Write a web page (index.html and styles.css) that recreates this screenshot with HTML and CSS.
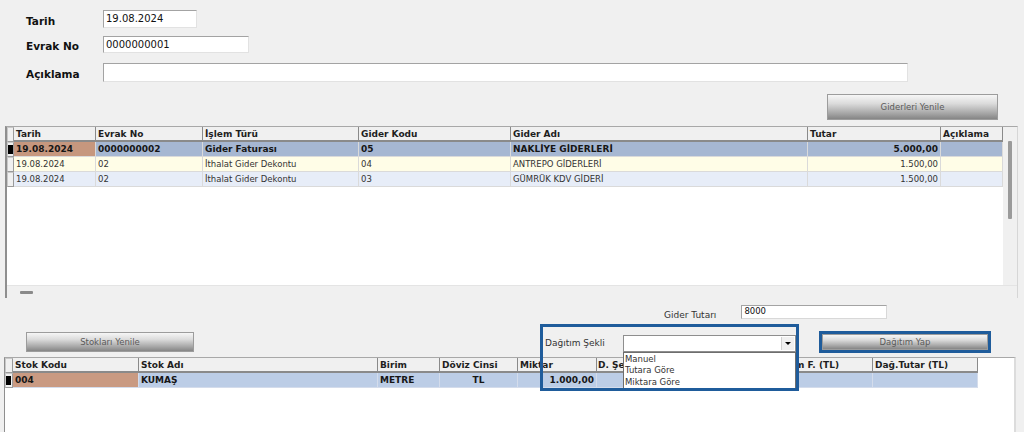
FILE: index.html
```html
<!DOCTYPE html>
<html lang="tr">
<head>
<meta charset="utf-8">
<title>Gider Dağıtımı</title>
<link rel="stylesheet" href="styles.css">
</head>
<body>
<div class="form">
  <div class="frow r1"><span class="flabel">Tarih</span><div class="field w-date">19.08.2024</div></div>
  <div class="frow r2"><span class="flabel">Evrak No</span><div class="field w-no">0000000001</div></div>
  <div class="frow r3"><span class="flabel">Açıklama</span><div class="field w-desc"></div></div>
</div>

<div class="toolbar">
  <div class="btn btn-giderler">Giderleri Yenile</div>
</div>

<div class="grid g1">
  <div class="g-head row">
    <div class="ind"></div>
    <div class="hc">Tarih</div>
    <div class="hc">Evrak No</div>
    <div class="hc">İşlem Türü</div>
    <div class="hc">Gider Kodu</div>
    <div class="hc">Gider Adı</div>
    <div class="hc">Tutar</div>
    <div class="hc">Açıklama</div>
  </div>
  <div class="vscroll"><div class="vthumb"></div></div>
  <div class="g-body">
    <div class="row sel">
      <div class="ind"><span class="mark"></span></div>
      <div class="c key">19.08.2024</div>
      <div class="c">0000000002</div>
      <div class="c">Gider Faturası</div>
      <div class="c">05</div>
      <div class="c">NAKLİYE GİDERLERİ</div>
      <div class="c num">5.000,00</div>
      <div class="c"></div>
    </div>
    <div class="row alt1">
      <div class="ind"></div>
      <div class="c">19.08.2024</div>
      <div class="c">02</div>
      <div class="c">İthalat Gider Dekontu</div>
      <div class="c">04</div>
      <div class="c">ANTREPO GİDERLERİ</div>
      <div class="c num">1.500,00</div>
      <div class="c"></div>
    </div>
    <div class="row alt2">
      <div class="ind"></div>
      <div class="c">19.08.2024</div>
      <div class="c">02</div>
      <div class="c">İthalat Gider Dekontu</div>
      <div class="c">03</div>
      <div class="c">GÜMRÜK KDV GİDERİ</div>
      <div class="c num">1.500,00</div>
      <div class="c"></div>
    </div>
  </div>
  <div class="hscroll"><div class="hthumb"></div></div>
</div>

<div class="bottom">
  <div class="tutar-row">
    <span class="slabel lbl-tutar">Gider Tutarı</span>
    <div class="field w-tutar">8000</div>
  </div>
  <div class="action-row">
    <div class="btn btn-stok">Stokları Yenile</div>
    <span class="slabel lbl-sekil">Dağıtım Şekli</span>
    <div class="combo">
      <div class="combo-arrow"><span class="tri"></span></div>
      <ul class="combo-list">
        <li>Manuel</li>
        <li>Tutara Göre</li>
        <li>Miktara Göre</li>
      </ul>
    </div>
    <div class="hl-btn"><div class="btn btn-yap">Dağıtım Yap</div></div>
  </div>
  <div class="highlight"></div>

  <div class="grid g2">
    <div class="row g2-head">
      <div class="ind"></div>
      <div class="hc">Stok Kodu</div>
      <div class="hc">Stok Adı</div>
      <div class="hc">Birim</div>
      <div class="hc">Döviz Cinsi</div>
      <div class="hc">Miktar</div>
      <div class="hc hc-sekil">D. Şe</div>
      <div class="hc"></div>
      <div class="hc hc-birimf">m F. (TL)</div>
      <div class="hc">Dağ.Tutar (TL)</div>
    </div>
    <div class="row sel2">
      <div class="ind"><span class="mark"></span></div>
      <div class="c key">004</div>
      <div class="c">KUMAŞ</div>
      <div class="c">METRE</div>
      <div class="c ctr">TL</div>
      <div class="c num">1.000,00</div>
      <div class="c"></div>
      <div class="c"></div>
      <div class="c"></div>
      <div class="c"></div>
    </div>
  </div>
</div>
</body>
</html>
```

FILE: styles.css
```css
html, body {
  margin: 0;
  padding: 0;
}
body {
  width: 1024px;
  height: 432px;
  overflow: hidden;
  background: #f0f0f0;
  font-family: "DejaVu Sans", Verdana, sans-serif;
  color: #1a1a1a;
}

/* ---------- top form ---------- */
.form {
  padding: 10px 0 0 26px;
  display: flex;
  flex-direction: column;
}
.frow {
  display: flex;
  align-items: center;
}
.r2 { margin-top: 8px; }
.r3 { margin-top: 10px; }
.flabel {
  width: 77px;
  font-size: 10.5px;
  font-weight: bold;
  color: #111;
  padding-top: 3px;
}
.field {
  box-sizing: border-box;
  background: #fff;
  border: 1px solid;
  border-color: #a3a3a3 #e2e2e2 #e2e2e2 #a3a3a3;
  font-size: 10px;
  line-height: 15px;
  padding-left: 2px;
  color: #111;
}
.w-date { width: 94px; height: 18px; }
.w-no { width: 146px; height: 17px; }
.w-desc { width: 805px; height: 19px; }

/* ---------- buttons ---------- */
.btn {
  box-sizing: border-box;
  border: 1px solid #9c9c9c;
  background: linear-gradient(#f6f6f6 0%, #dcdcdc 35%, #a8a8a8 75%, #858585 100%);
  color: #5a5a5a;
  font-size: 8.5px;
  display: flex;
  align-items: center;
  justify-content: center;
}
.toolbar {
  display: flex;
  justify-content: flex-end;
  padding-right: 26px;
  margin-top: 12px;
}
.btn-giderler {
  width: 171px;
  height: 26px;
}

/* ---------- grids ---------- */
.grid {
  box-sizing: border-box;
  background: #fff;
  overflow: hidden;
}
.row > div {
  box-sizing: border-box;
  overflow: hidden;
  white-space: nowrap;
}
.hc {
  background: #f0f0f0;
  border-right: 1px solid #8a8a8a;
  border-bottom: 2px solid #8a8a8a;
  font-size: 9px;
  font-weight: bold;
  color: #1e1e1e;
  padding: 0 2px;
  line-height: 14px;
}
.c {
  border-right: 1px solid #dadada;
  border-bottom: 1px solid #dadada;
  font-size: 8.5px;
  color: #333;
  padding: 0 2px;
  line-height: 14px;
}
.num { text-align: right; }
.ctr { text-align: center; }
.ind {
  background: #f0f0f0;
  border: 1px solid #9a9a9a;
  border-left-color: #c8c8c8;
  border-top-color: #c8c8c8;
  position: relative;
}
.mark {
  position: absolute;
  left: 0;
  top: 2px;
  width: 5px;
  height: 9px;
  background: #000;
}

/* grid 1 */
.g1 {
  margin: 6px 0 0 5px;
  width: 1013px;
  height: 172px;
  border-left: 2px solid #8f8f8f;
  border-top: 1px solid #a8a8a8;
  border-right: 1px solid #d6d6d6;
  display: grid;
  grid-template-columns: 996px 14px;
  grid-template-rows: 15px 1fr 13px;
}
.g1 .row {
  display: grid;
  grid-template-columns: 7px 82px 107px 156px 152px 297px 133px 62px;
  height: 15px;
}
.g1 .g-head { grid-column: 1; grid-row: 1; }
.g1 .g-body { grid-column: 1; grid-row: 2; background: #fff; }
.g1 .vscroll {
  grid-column: 2;
  grid-row: 1 / 3;
  background: #f0f0f0;
  position: relative;
}
.vthumb {
  position: absolute;
  left: 5px;
  top: 14px;
  width: 4px;
  height: 78px;
  background: #9a9a9a;
  border-radius: 1px;
}
.g1 .hscroll {
  grid-column: 1 / 3;
  grid-row: 3;
  background: #f0f0f0;
  border-top: 1px solid #e4e4e4;
  position: relative;
}
.hthumb {
  position: absolute;
  left: 13px;
  top: 5px;
  width: 13px;
  height: 3px;
  background: #8a8a8a;
  border-radius: 1px;
}
.sel .c {
  background: #a6b7d2;
  font-weight: bold;
  font-size: 9px;
  color: #161616;
}
.sel .c.key { background: #c6977e; }
.alt1 .c { background: #fffde7; }
.alt2 .c { background: #e7edf8; }

/* ---------- bottom ---------- */
.bottom {
  position: relative;
}
.slabel {
  font-size: 9px;
  color: #333;
}
.tutar-row {
  display: flex;
  align-items: center;
  height: 14px;
  padding: 7px 0 0 664px;
}
.lbl-tutar {
  position: relative;
  top: 3px;
}
.w-tutar {
  margin-left: 25px;
  width: 146px;
  height: 14px;
  font-size: 8.5px;
  line-height: 11px;
  border-color: #a3a3a3 #d8d8d8 #d8d8d8 #a3a3a3;
}
.action-row {
  display: flex;
  align-items: center;
  padding-left: 26px;
  margin-top: 12px;
  height: 22px;
}
.btn-stok {
  width: 168px;
  height: 20px;
}
.lbl-sekil {
  margin-left: 351px;
  width: 78px;
  padding-top: 2px;
}
.combo {
  box-sizing: border-box;
  position: relative;
  width: 173px;
  height: 17px;
  margin-top: 2px;
  background: #fff;
  border: 1px solid #8e8e8e;
  z-index: 3;
}
.combo-arrow {
  position: absolute;
  right: 1px;
  top: 1px;
  width: 12px;
  height: 13px;
  background: #f0f0f0;
  border-left: 1px solid #d0d0d0;
}
.tri {
  position: absolute;
  left: 3px;
  top: 5px;
  border-left: 3px solid transparent;
  border-right: 3px solid transparent;
  border-top: 3px solid #000;
}
.combo-list {
  box-sizing: border-box;
  position: absolute;
  left: -1px;
  top: 16px;
  width: 173px;
  height: 37px;
  margin: 0;
  padding: 1px 0 0 1px;
  list-style: none;
  background: #fff;
  border: 1px solid #6e6e6e;
  font-size: 8.5px;
  line-height: 11.5px;
  color: #333;
}
.hl-btn {
  margin-left: 23px;
  width: 172px;
  height: 22px;
  box-sizing: border-box;
  border: 3px solid #1f5c9b;
}
.btn-yap {
  width: 100%;
  height: 100%;
}
.highlight {
  position: absolute;
  left: 540px;
  top: 26px;
  width: 259px;
  height: 67px;
  box-sizing: border-box;
  border: 3px solid #1f5c9b;
  z-index: 4;
  pointer-events: none;
}

/* grid 2 */
.g2 {
  margin: 4px 0 0 4px;
  width: 1012px;
  height: 90px;
  border-left: 1px solid #8f8f8f;
  border-top: 1px solid #a8a8a8;
  border-right: 2px solid #dcdcdc;
}
.g2 .row {
  display: grid;
  grid-template-columns: 8px 126px 239px 62px 78px 79px 93px 85px 98px 105px;
  height: 15px;
}
.hc-sekil {
  padding-left: 1px !important;
}
.hc-birimf {
  padding-left: 20px !important;
}
.sel2 .c {
  background: #bccde6;
  font-weight: bold;
  font-size: 9px;
  color: #161616;
  border-color: #d4dceb;
}
.sel2 .c.key { background: #c99a82; }
```
